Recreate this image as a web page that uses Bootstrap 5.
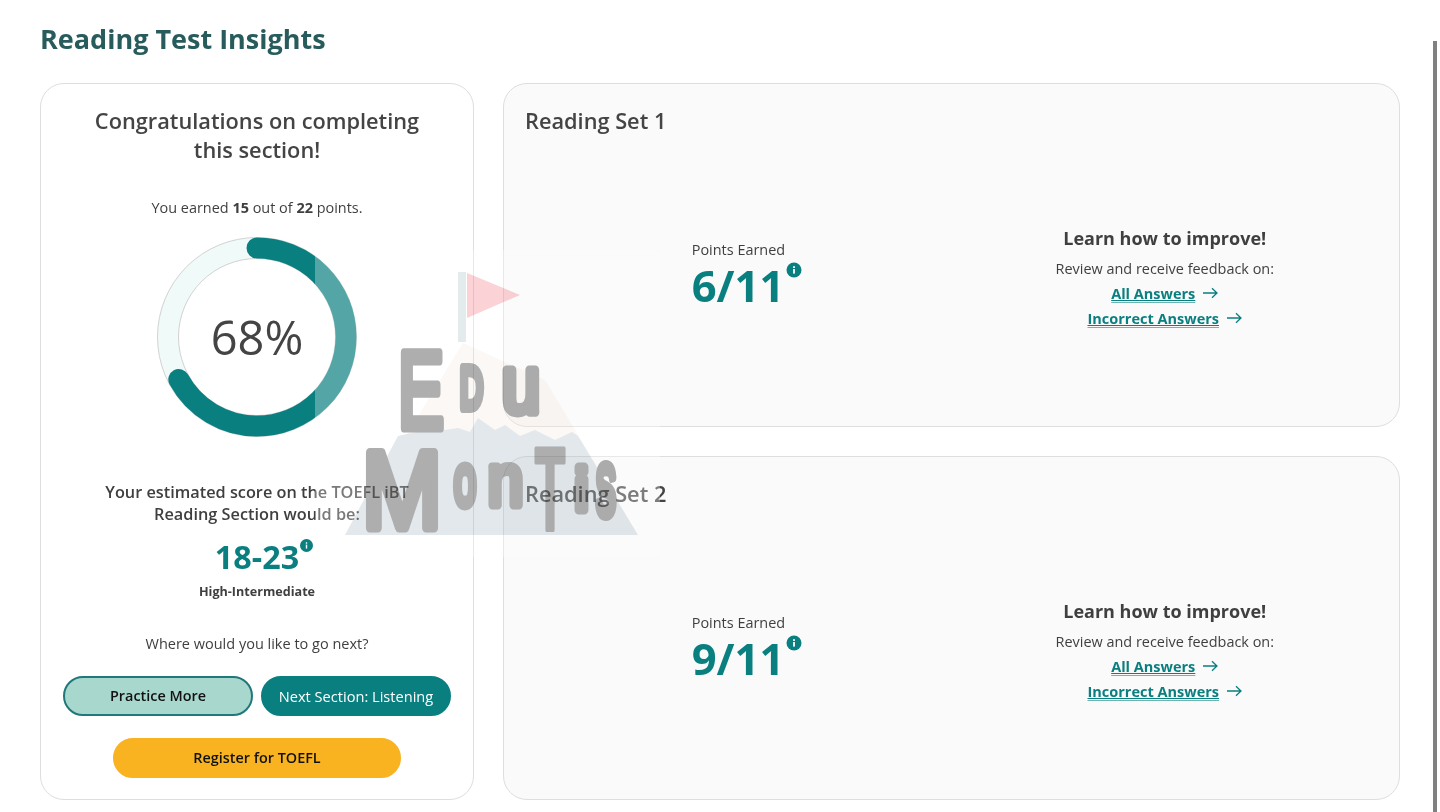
<!DOCTYPE html>
<html lang="en">
<head>
<meta charset="utf-8">
<title>Reading Test Insights</title>
<link href="https://cdn.jsdelivr.net/npm/bootstrap@5.3.0/dist/css/bootstrap.min.css" rel="stylesheet">
<style>
html,body{height:812px;overflow:hidden;background:#fff}
body{font-family:"Open Sans","Liberation Sans",sans-serif;color:#3f3f3f;position:relative}
.page-wrap{padding:21px 40px 12px}
.page-title{font-size:27px;line-height:35px;font-weight:700;color:#285c5c;margin:0 0 27px}
.layout{height:717px;gap:29px}
.summary-panel{width:434px;flex:none;border:1px solid #dedede;border-radius:24px;background:#fff;padding:22px 20px 21px}
.set-panel{flex:1 1 0;border:1px solid #dedede;border-radius:24px;background:#fafafa;padding:22px 21px}
.panel-head{font-size:21.75px;line-height:29px;font-weight:600;color:#444;margin:0}
.earned-line{font-size:14.45px;line-height:20px;margin:34px 0 19px}
.ring-box{width:200px;height:200px;position:relative}
.ring-label{font-size:47px;font-weight:400;line-height:1;color:#444}
.est-line{font-size:16.3px;line-height:22px;font-weight:600;margin:44px 0 9px;white-space:nowrap}
.score-range{font-size:32.3px;line-height:44px;font-weight:700;color:#0a7f80;position:relative;display:inline-block}
.level-line{font-size:12.6px;line-height:18px;font-weight:700;margin:5px 0 33px}
.next-line{font-size:14.5px;line-height:20px;margin:0 0 22px}
.pill-btn{height:40px;border-radius:20px;font-size:14.4px;line-height:1;font-weight:600;display:flex;align-items:center;justify-content:center;padding:0;color:#111}
.pill-btn:hover{color:#111}
.pill-light{width:190px;background:#a8d7cd;border:2px solid #20787a}
.pill-dark{width:190px;background:#0a7f80;border:2px solid #0a7f80;color:#fff;font-weight:400;font-size:14.6px}
.pill-dark:hover{color:#fff;background:#0a7f80}
.pill-gold{width:288px;background:#f9b321;border:2px solid #f9b321;margin-top:22px}
.pill-gold:hover{background:#f9b321}
.info-dot{position:absolute;display:block}
.set-body{flex:1 1 0;padding-bottom:23px}
.set-half{width:50%;display:flex;justify-content:center;padding-top:105px}
.improve-col{padding-top:90.5px}
.points-block{width:93px;height:74px;position:relative}
.points-cap{font-size:14.45px;line-height:20px;white-space:nowrap}
.points-val{font-size:43.5px;line-height:51px;font-weight:700;color:#0a7f80;white-space:nowrap}
.improve-head{font-size:18px;line-height:25px;font-weight:700;margin:0 0 8px}
.improve-sub{font-size:14.45px;line-height:20px;margin:0 0 2px}
.answer-link{font-size:14.5px;line-height:25px;font-weight:700;color:#0a7f80;display:flex;justify-content:center;align-items:center;gap:7px}
.answer-link span{text-decoration:underline;text-decoration-color:#6fb3b3;text-decoration-thickness:1px;text-underline-offset:3px}
.answer-link:hover{color:#0a7f80}
.watermark{position:absolute;left:315px;top:250px;width:345px;height:307px;background:rgba(255,255,255,.3);pointer-events:none}
.watermark svg{mix-blend-mode:multiply;display:block}
.watermark text{font-family:"Liberation Sans",sans-serif;fill:#aeaeae;stroke:#aeaeae;stroke-linejoin:round;stroke-linecap:round}
.fake-scroll{position:absolute;left:1433px;top:41px;width:4px;height:771px;background:#808080}
</style>
</head>
<body>
<div class="page-wrap">
  <h1 class="page-title">Reading Test Insights</h1>
  <div class="d-flex layout">
    <section class="summary-panel d-flex flex-column align-items-center text-center">
      <h2 class="panel-head">Congratulations on completing<br>this section!</h2>
      <p class="earned-line">You earned <b>15</b> out of <b>22</b> points.</p>
      <div class="ring-box d-flex align-items-center justify-content-center">
        <svg class="position-absolute top-0 start-0" width="200" height="200" viewBox="0 0 200 200">
          <circle cx="100" cy="100" r="89" fill="none" stroke="#f0faf8" stroke-width="21"/>
          <circle cx="100" cy="100" r="99.5" fill="none" stroke="#d2d2d2" stroke-width="1"/>
          <circle cx="100" cy="100" r="78.5" fill="none" stroke="#d2d2d2" stroke-width="1"/>
          <circle cx="100" cy="100" r="89" fill="none" stroke="#0a7f80" stroke-width="21" stroke-linecap="round" stroke-dasharray="374.4 559.2" transform="rotate(-90 100 100)"/>
        </svg>
        <span class="ring-label position-relative">68%</span>
      </div>
      <p class="est-line">Your estimated score on the TOEFL iBT<br>Reading Section would be:</p>
      <div><span class="score-range">18-23<svg class="info-dot" style="left:85px;top:5px" width="13" height="13" viewBox="0 0 13 13"><circle cx="6.5" cy="6.5" r="6.5" fill="#0a7f80"/><rect x="5.8" y="5.6" width="1.4" height="4" fill="#fff"/><rect x="5.8" y="3.3" width="1.4" height="1.4" fill="#fff"/></svg></span></div>
      <p class="level-line">High-Intermediate</p>
      <p class="next-line">Where would you like to go next?</p>
      <div class="d-flex gap-2 justify-content-center">
        <a class="btn pill-btn pill-light" href="#">Practice More</a>
        <a class="btn pill-btn pill-dark" href="#">Next Section: Listening</a>
      </div>
      <a class="btn pill-btn pill-gold" href="#">Register for TOEFL</a>
    </section>
    <div class="flex-fill d-flex flex-column layout">
      <section class="set-panel d-flex flex-column">
        <h2 class="panel-head">Reading Set 1</h2>
        <div class="set-body d-flex">
          <div class="set-half">
            <div class="points-block">
              <div class="points-cap">Points Earned</div>
              <div class="points-val">6/11</div>
              <svg class="info-dot" style="left:94px;top:22px" width="16" height="16" viewBox="0 0 16 16"><circle cx="8" cy="8" r="7.5" fill="#0a7f80"/><rect x="7.1" y="7" width="1.8" height="4.6" fill="#fff"/><rect x="7.1" y="4.2" width="1.8" height="1.8" fill="#fff"/></svg>
            </div>
          </div>
          <div class="set-half text-center d-block improve-col">
            <h3 class="improve-head">Learn how to improve!</h3>
            <p class="improve-sub">Review and receive feedback on:</p>
            <a class="answer-link" href="#"><span>All Answers</span><svg width="16" height="12" viewBox="0 0 16 12"><path d="M1 6H15M10 1.2 15 6 10 10.8" fill="none" stroke="#0a7f80" stroke-width="1.3"/></svg></a>
            <a class="answer-link" href="#"><span>Incorrect Answers</span><svg width="16" height="12" viewBox="0 0 16 12"><path d="M1 6H15M10 1.2 15 6 10 10.8" fill="none" stroke="#0a7f80" stroke-width="1.3"/></svg></a>
          </div>
        </div>
      </section>
      <section class="set-panel d-flex flex-column">
        <h2 class="panel-head">Reading Set 2</h2>
        <div class="set-body d-flex">
          <div class="set-half">
            <div class="points-block">
              <div class="points-cap">Points Earned</div>
              <div class="points-val">9/11</div>
              <svg class="info-dot" style="left:94px;top:22px" width="16" height="16" viewBox="0 0 16 16"><circle cx="8" cy="8" r="7.5" fill="#0a7f80"/><rect x="7.1" y="7" width="1.8" height="4.6" fill="#fff"/><rect x="7.1" y="4.2" width="1.8" height="1.8" fill="#fff"/></svg>
            </div>
          </div>
          <div class="set-half text-center d-block improve-col">
            <h3 class="improve-head">Learn how to improve!</h3>
            <p class="improve-sub">Review and receive feedback on:</p>
            <a class="answer-link" href="#"><span>All Answers</span><svg width="16" height="12" viewBox="0 0 16 12"><path d="M1 6H15M10 1.2 15 6 10 10.8" fill="none" stroke="#0a7f80" stroke-width="1.3"/></svg></a>
            <a class="answer-link" href="#"><span>Incorrect Answers</span><svg width="16" height="12" viewBox="0 0 16 12"><path d="M1 6H15M10 1.2 15 6 10 10.8" fill="none" stroke="#0a7f80" stroke-width="1.3"/></svg></a>
          </div>
        </div>
      </section>
    </div>
  </div>
</div>
<div class="watermark">
  <svg width="345" height="307" viewBox="315 250 345 307">
    <rect x="458" y="272" width="8" height="70" fill="#e3ebed"/>
    <polygon points="467,273 520,295 467,318" fill="#fbd3d7"/>
    <polygon points="463,343 345,535 638,535 545,380" fill="#fbf8f6"/>
    <polygon points="345,535 398,436 416,432 430,418 445,430 458,428 470,432 478,418 495,430 505,425 520,436 535,430 555,440 572,432 578,436 638,535" fill="#e2e8eb"/>
    <text x="398" y="428" font-size="110" stroke-width="9" textLength="46" lengthAdjust="spacingAndGlyphs">E</text>
    <text x="460" y="408" font-size="58" stroke-width="10" textLength="23" lengthAdjust="spacingAndGlyphs">D</text>
    <text x="502" y="412" font-size="79" stroke-width="9" textLength="38" lengthAdjust="spacingAndGlyphs">u</text>
    <text x="362" y="528" font-size="110" stroke-width="9" textLength="80" lengthAdjust="spacingAndGlyphs">M</text>
    <text x="454" y="505" font-size="72" stroke-width="10" textLength="22" lengthAdjust="spacingAndGlyphs">o</text>
    <text x="488" y="505" font-size="73" stroke-width="9" textLength="35" lengthAdjust="spacingAndGlyphs">n</text>
    <text x="535" y="530" font-size="116" font-weight="700" stroke-width="5" textLength="30" lengthAdjust="spacingAndGlyphs">T</text>
    <text x="575" y="510" font-size="60" stroke-width="9" textLength="13" lengthAdjust="spacingAndGlyphs">i</text>
    <text x="596" y="515" font-size="92" stroke-width="10" textLength="20" lengthAdjust="spacingAndGlyphs">s</text>
  </svg>
</div>
<div class="fake-scroll"></div>
<script src="https://cdn.jsdelivr.net/npm/bootstrap@5.3.0/dist/js/bootstrap.bundle.min.js"></script>
</body>
</html>
